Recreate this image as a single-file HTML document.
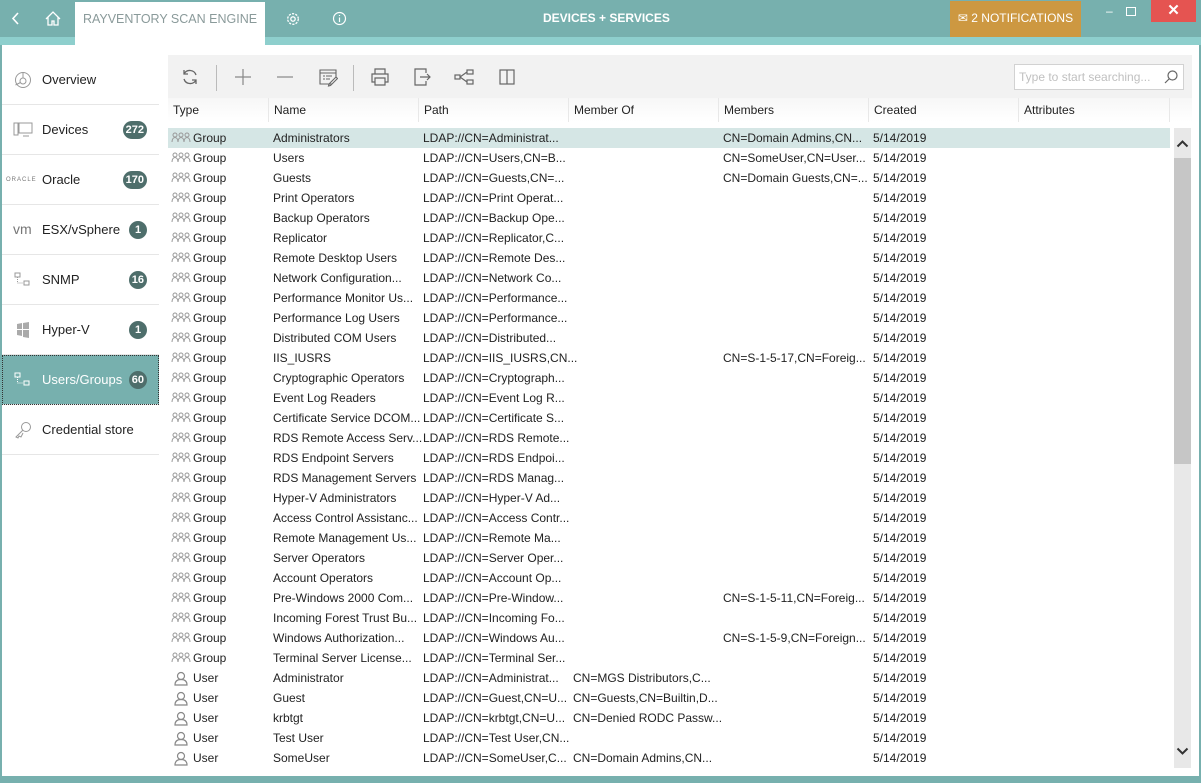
<!DOCTYPE html>
<html><head><meta charset="utf-8">
<style>
*{margin:0;padding:0;box-sizing:border-box}
body{width:1201px;height:783px;overflow:hidden;background:#fff;font-family:"Liberation Sans",sans-serif;font-size:12px;color:#222;position:relative}
.abs{position:absolute}
#title{left:0;top:0;width:1201px;height:37px;background:#77b0ae}
#strip{left:0;top:37px;width:1201px;height:8px;background:#8ecfcd}
#tab{left:75px;top:2px;width:190px;height:43px;background:#fff;color:#8a9a9a;font-size:12.5px;line-height:34px;text-align:center}
.tt{color:#fff;font-weight:bold;font-size:12px}
#notif{left:950px;top:1px;width:131px;height:36px;background:#cd9841;color:#fff;font-size:12px;line-height:35px;text-align:center}
#close{left:1151px;top:0;width:45px;height:22px;background:#e55451;color:#fff;text-align:center;font-size:15px;font-weight:bold;line-height:21px}
#lb{left:0;top:45px;width:2px;height:738px;background:#77b0ae}
#rb{left:1199px;top:45px;width:2px;height:738px;background:#77b0ae}
#bb{left:0;top:776px;width:1201px;height:7px;background:#77b0ae}
.si{position:absolute;left:2px;width:157px;height:50px;border-bottom:1px solid #e6e6e6;font-size:13px;line-height:50px}
.si .lab{position:absolute;left:40px}
.si .ic{position:absolute;left:11px;top:16px;width:20px;height:18px}
.bad{position:absolute;right:12px;top:16px;height:18px;min-width:18px;padding:0 3px;border-radius:9px;background:#4e6e6b;color:#fff;font-size:11px;font-weight:bold;line-height:18px;text-align:center}
.sel{background:#77b0ae;color:#fff;outline:1px dotted #333;outline-offset:-1px}
#tb{left:168px;top:55px;width:1024px;height:43px;background:#f2f2f2}
.tbi{position:absolute;top:12px;width:20px;height:20px}
#search{left:1014px;top:64px;width:170px;height:26px;background:#fff;border:1px solid #d2d2d2;color:#c0c0c0;font-size:12px;line-height:24px;padding-left:4px}
#hdr{left:168px;top:98px;width:1024px;height:24px;background:linear-gradient(#f7f7f7,#fff)}
.hc{position:absolute;top:0;height:24px;line-height:24px;padding-left:5px;border-right:1px solid #e8e8e8}
.row{position:absolute;left:168px;width:1002px;height:20px;line-height:20px}
.row span{position:absolute;white-space:nowrap}
.row .ty{left:25px}.row .nm{left:105px}.row .pa{left:255px}.row .mo{left:405px}.row .me{left:555px}.row .cr{left:705px}
.row svg{position:absolute;left:3px;top:3px}
#sb{left:1174px;top:128px;width:17px;height:640px;background:#e8e8e8}
#thumb{left:1174px;top:158px;width:17px;height:306px;background:#c6c6c6}
</style></head><body>
<svg width="0" height="0" style="position:absolute"><defs>
<g id="grp" fill="none" stroke="#999" stroke-width="1"><circle cx="4" cy="4" r="2"/><path d="M1 11c0-3 1.5-4.5 3-4.5S7 8 7 11"/><circle cx="10" cy="4" r="2"/><path d="M7 11c0-3 1.5-4.5 3-4.5S13 8 13 11"/><circle cx="16" cy="4" r="2"/><path d="M13 11c0-3 1.5-4.5 3-4.5S19 8 19 11"/></g>
<g id="usr" fill="none" stroke="#888" stroke-width="1.2"><circle cx="10" cy="5" r="3.5"/><path d="M4 14c0-4 2.5-5.5 6-5.5s6 1.5 6 5.5z"/></g>
</defs></svg>

<div id="title" class="abs"></div>
<div id="strip" class="abs"></div>
<svg class="abs" style="left:11px;top:11px" width="10" height="15" fill="none" stroke="#fff" stroke-width="1.6"><path d="M7 2L2 7.5 7 13"/></svg>
<svg class="abs" style="left:45px;top:11px" width="16" height="15" fill="none" stroke="#fff" stroke-width="1.3"><path d="M1 8L8 1l7 7M3 6v8h4v-4h2v4h4V6"/></svg>
<div id="tab" class="abs">RAYVENTORY SCAN ENGINE</div>
<svg class="abs" style="left:286px;top:12px" width="14" height="14" fill="none" stroke="#fff" stroke-width="1.3"><circle cx="7" cy="7" r="2.2"/><circle cx="7" cy="7" r="5.3" stroke-dasharray="2.2 1.2"/></svg>
<svg class="abs" style="left:332px;top:11px" width="15" height="15" fill="none" stroke="#fff" stroke-width="1.2"><circle cx="7.5" cy="7.5" r="6"/><path d="M7.5 6.5v4.5M7.5 4v1"/></svg>
<div class="abs tt" style="left:543px;top:11px">DEVICES + SERVICES</div>
<div id="notif" class="abs">&#9993; 2 NOTIFICATIONS</div>
<div class="abs" style="left:1106px;top:4px;color:#fff;font-size:12px">&#8211;</div>
<div class="abs" style="left:1126px;top:7px;width:10px;height:9px;border:1px solid #fff"></div>
<div id="close" class="abs">&#10005;</div>
<div id="lb" class="abs"></div><div id="rb" class="abs"></div>

<div class="si" style="top:55px"><svg class="ic" viewBox="0 0 20 18" fill="none" stroke="#999"><circle cx="10" cy="9" r="7.5"/><circle cx="10" cy="10" r="3"/><path d="M10 1.5v5.5M7.5 11.5l-5 2.5"/></svg><span class="lab">Overview</span></div>
<div class="si" style="top:105px"><svg class="ic" viewBox="0 0 20 18" fill="none" stroke="#999"><rect x="1" y="2" width="4" height="12"/><rect x="6" y="2" width="13" height="10"/><path d="M10 15h6"/></svg><span class="lab">Devices</span><span class="bad">272</span></div>
<div class="si" style="top:155px"><span style="position:absolute;left:4px;top:0;font-size:6px;color:#777;letter-spacing:1px">ORACLE</span><span class="lab">Oracle</span><span class="bad">170</span></div>
<div class="si" style="top:205px"><span style="position:absolute;left:11px;top:-1px;font-size:14px;color:#777">vm</span><span class="lab">ESX/vSphere</span><span class="bad">1</span></div>
<div class="si" style="top:255px"><svg class="ic" viewBox="0 0 20 18" fill="none" stroke="#999"><rect x="2" y="2" width="5" height="4"/><rect x="11" y="10" width="5" height="4"/><path d="M4.5 6v6h6" stroke-dasharray="1 1"/></svg><span class="lab">SNMP</span><span class="bad">16</span></div>
<div class="si" style="top:305px"><svg class="ic" viewBox="0 0 20 18" fill="#aaa"><path d="M4 3l5-1v6H4zM10 2l6-1v7h-6zM4 9h5v6l-5-1zM10 9h6v8l-6-1z"/></svg><span class="lab">Hyper-V</span><span class="bad">1</span></div>
<div class="si sel" style="top:355px;height:50px"><svg class="ic" viewBox="0 0 20 18" fill="none" stroke="#fff"><rect x="2" y="2" width="5" height="4"/><rect x="11" y="10" width="5" height="4"/><path d="M4.5 6v6h6" stroke-dasharray="1 1"/></svg><span class="lab">Users/Groups</span><span class="bad">60</span></div>
<div class="si" style="top:405px"><svg class="ic" viewBox="0 0 20 18" fill="none" stroke="#999"><circle cx="13" cy="6" r="4.5"/><path d="M10 9l-7 7 2 1 1-2 2 1 1-2 1-2"/></svg><span class="lab">Credential store</span></div>

<div id="tb" class="abs">
<svg class="tbi" style="left:12px" viewBox="0 0 20 20" fill="none" stroke="#666" stroke-width="1.3"><path d="M16 8a6.5 6.5 0 0 0-12-1M4 12a6.5 6.5 0 0 0 12 1M4 3v4h4M16 17v-4h-4"/></svg>
<div class="abs" style="left:48px;top:10px;width:1px;height:26px;background:#bbb"></div>
<svg class="tbi" style="left:65px" viewBox="0 0 20 20" stroke="#888" stroke-width="1.2"><path d="M10 2v16M2 10h16"/></svg>
<svg class="tbi" style="left:107px" viewBox="0 0 20 20" stroke="#888" stroke-width="1.2"><path d="M2 10h16"/></svg>
<svg class="tbi" style="left:150px" viewBox="0 0 20 20" fill="none" stroke="#666" stroke-width="1.1"><path d="M14 17H2V3h16v7M2 6h16M5 9h2M8 9h6M5 12h2M8 12h4M11 17l7-7 1.5 1.5-7 7-2 .5z"/></svg>
<div class="abs" style="left:185px;top:10px;width:1px;height:26px;background:#bbb"></div>
<svg class="tbi" style="left:202px" viewBox="0 0 20 20" fill="none" stroke="#666" stroke-width="1.2"><path d="M5 7V2h10v5M5 15H2V7h16v8h-3M5 11h10v7H5z"/></svg>
<svg class="tbi" style="left:244px" viewBox="0 0 20 20" fill="none" stroke="#666" stroke-width="1.2"><path d="M14 6V2H3v16h11v-4M8 10h10M15 7l3 3-3 3"/></svg>
<svg class="tbi" style="left:286px" viewBox="0 0 20 20" fill="none" stroke="#666" stroke-width="1.2"><rect x="1" y="8" width="5" height="4"/><rect x="13" y="3" width="6" height="4"/><rect x="13" y="13" width="6" height="4"/><path d="M6 10l7-5M6 10l7 5"/></svg>
<svg class="tbi" style="left:329px" viewBox="0 0 20 20" fill="none" stroke="#666" stroke-width="1.2"><rect x="3" y="3" width="14" height="14"/><path d="M10 3v14"/></svg>
</div>
<div id="search" class="abs">Type to start searching...<svg style="position:absolute;right:5px;top:5px" width="14" height="14" fill="none" stroke="#666" stroke-width="1.2"><circle cx="8.5" cy="5.5" r="4.5"/><path d="M5.5 8.5L1 13"/></svg></div>

<div id="hdr" class="abs">
<div class="hc" style="left:0;width:101px">Type</div>
<div class="hc" style="left:101px;width:150px">Name</div>
<div class="hc" style="left:251px;width:150px">Path</div>
<div class="hc" style="left:401px;width:150px">Member Of</div>
<div class="hc" style="left:551px;width:150px">Members</div>
<div class="hc" style="left:701px;width:150px">Created</div>
<div class="hc" style="left:851px;width:151px">Attributes</div>
</div>

<div class="row" style="top:128px;background:#d5e6e5"><svg width="20" height="14"><use href="#grp"/></svg><span class="ty">Group</span><span class="nm">Administrators</span><span class="pa">LDAP://CN=Administrat...</span><span class="me">CN=Domain Admins,CN...</span><span class="cr">5/14/2019</span></div>
<div class="row" style="top:148px"><svg width="20" height="14"><use href="#grp"/></svg><span class="ty">Group</span><span class="nm">Users</span><span class="pa">LDAP://CN=Users,CN=B...</span><span class="me">CN=SomeUser,CN=User...</span><span class="cr">5/14/2019</span></div>
<div class="row" style="top:168px"><svg width="20" height="14"><use href="#grp"/></svg><span class="ty">Group</span><span class="nm">Guests</span><span class="pa">LDAP://CN=Guests,CN=...</span><span class="me">CN=Domain Guests,CN=...</span><span class="cr">5/14/2019</span></div>
<div class="row" style="top:188px"><svg width="20" height="14"><use href="#grp"/></svg><span class="ty">Group</span><span class="nm">Print Operators</span><span class="pa">LDAP://CN=Print Operat...</span><span class="cr">5/14/2019</span></div>
<div class="row" style="top:208px"><svg width="20" height="14"><use href="#grp"/></svg><span class="ty">Group</span><span class="nm">Backup Operators</span><span class="pa">LDAP://CN=Backup Ope...</span><span class="cr">5/14/2019</span></div>
<div class="row" style="top:228px"><svg width="20" height="14"><use href="#grp"/></svg><span class="ty">Group</span><span class="nm">Replicator</span><span class="pa">LDAP://CN=Replicator,C...</span><span class="cr">5/14/2019</span></div>
<div class="row" style="top:248px"><svg width="20" height="14"><use href="#grp"/></svg><span class="ty">Group</span><span class="nm">Remote Desktop Users</span><span class="pa">LDAP://CN=Remote Des...</span><span class="cr">5/14/2019</span></div>
<div class="row" style="top:268px"><svg width="20" height="14"><use href="#grp"/></svg><span class="ty">Group</span><span class="nm">Network Configuration...</span><span class="pa">LDAP://CN=Network Co...</span><span class="cr">5/14/2019</span></div>
<div class="row" style="top:288px"><svg width="20" height="14"><use href="#grp"/></svg><span class="ty">Group</span><span class="nm">Performance Monitor Us...</span><span class="pa">LDAP://CN=Performance...</span><span class="cr">5/14/2019</span></div>
<div class="row" style="top:308px"><svg width="20" height="14"><use href="#grp"/></svg><span class="ty">Group</span><span class="nm">Performance Log Users</span><span class="pa">LDAP://CN=Performance...</span><span class="cr">5/14/2019</span></div>
<div class="row" style="top:328px"><svg width="20" height="14"><use href="#grp"/></svg><span class="ty">Group</span><span class="nm">Distributed COM Users</span><span class="pa">LDAP://CN=Distributed...</span><span class="cr">5/14/2019</span></div>
<div class="row" style="top:348px"><svg width="20" height="14"><use href="#grp"/></svg><span class="ty">Group</span><span class="nm">IIS_IUSRS</span><span class="pa">LDAP://CN=IIS_IUSRS,CN...</span><span class="me">CN=S-1-5-17,CN=Foreig...</span><span class="cr">5/14/2019</span></div>
<div class="row" style="top:368px"><svg width="20" height="14"><use href="#grp"/></svg><span class="ty">Group</span><span class="nm">Cryptographic Operators</span><span class="pa">LDAP://CN=Cryptograph...</span><span class="cr">5/14/2019</span></div>
<div class="row" style="top:388px"><svg width="20" height="14"><use href="#grp"/></svg><span class="ty">Group</span><span class="nm">Event Log Readers</span><span class="pa">LDAP://CN=Event Log R...</span><span class="cr">5/14/2019</span></div>
<div class="row" style="top:408px"><svg width="20" height="14"><use href="#grp"/></svg><span class="ty">Group</span><span class="nm">Certificate Service DCOM...</span><span class="pa">LDAP://CN=Certificate S...</span><span class="cr">5/14/2019</span></div>
<div class="row" style="top:428px"><svg width="20" height="14"><use href="#grp"/></svg><span class="ty">Group</span><span class="nm">RDS Remote Access Serv...</span><span class="pa">LDAP://CN=RDS Remote...</span><span class="cr">5/14/2019</span></div>
<div class="row" style="top:448px"><svg width="20" height="14"><use href="#grp"/></svg><span class="ty">Group</span><span class="nm">RDS Endpoint Servers</span><span class="pa">LDAP://CN=RDS Endpoi...</span><span class="cr">5/14/2019</span></div>
<div class="row" style="top:468px"><svg width="20" height="14"><use href="#grp"/></svg><span class="ty">Group</span><span class="nm">RDS Management Servers</span><span class="pa">LDAP://CN=RDS Manag...</span><span class="cr">5/14/2019</span></div>
<div class="row" style="top:488px"><svg width="20" height="14"><use href="#grp"/></svg><span class="ty">Group</span><span class="nm">Hyper-V Administrators</span><span class="pa">LDAP://CN=Hyper-V Ad...</span><span class="cr">5/14/2019</span></div>
<div class="row" style="top:508px"><svg width="20" height="14"><use href="#grp"/></svg><span class="ty">Group</span><span class="nm">Access Control Assistanc...</span><span class="pa">LDAP://CN=Access Contr...</span><span class="cr">5/14/2019</span></div>
<div class="row" style="top:528px"><svg width="20" height="14"><use href="#grp"/></svg><span class="ty">Group</span><span class="nm">Remote Management Us...</span><span class="pa">LDAP://CN=Remote Ma...</span><span class="cr">5/14/2019</span></div>
<div class="row" style="top:548px"><svg width="20" height="14"><use href="#grp"/></svg><span class="ty">Group</span><span class="nm">Server Operators</span><span class="pa">LDAP://CN=Server Oper...</span><span class="cr">5/14/2019</span></div>
<div class="row" style="top:568px"><svg width="20" height="14"><use href="#grp"/></svg><span class="ty">Group</span><span class="nm">Account Operators</span><span class="pa">LDAP://CN=Account Op...</span><span class="cr">5/14/2019</span></div>
<div class="row" style="top:588px"><svg width="20" height="14"><use href="#grp"/></svg><span class="ty">Group</span><span class="nm">Pre-Windows 2000 Com...</span><span class="pa">LDAP://CN=Pre-Window...</span><span class="me">CN=S-1-5-11,CN=Foreig...</span><span class="cr">5/14/2019</span></div>
<div class="row" style="top:608px"><svg width="20" height="14"><use href="#grp"/></svg><span class="ty">Group</span><span class="nm">Incoming Forest Trust Bu...</span><span class="pa">LDAP://CN=Incoming Fo...</span><span class="cr">5/14/2019</span></div>
<div class="row" style="top:628px"><svg width="20" height="14"><use href="#grp"/></svg><span class="ty">Group</span><span class="nm">Windows Authorization...</span><span class="pa">LDAP://CN=Windows Au...</span><span class="me">CN=S-1-5-9,CN=Foreign...</span><span class="cr">5/14/2019</span></div>
<div class="row" style="top:648px"><svg width="20" height="14"><use href="#grp"/></svg><span class="ty">Group</span><span class="nm">Terminal Server License...</span><span class="pa">LDAP://CN=Terminal Ser...</span><span class="cr">5/14/2019</span></div>
<div class="row" style="top:668px"><svg width="20" height="15"><use href="#usr"/></svg><span class="ty">User</span><span class="nm">Administrator</span><span class="pa">LDAP://CN=Administrat...</span><span class="mo">CN=MGS Distributors,C...</span><span class="cr">5/14/2019</span></div>
<div class="row" style="top:688px"><svg width="20" height="15"><use href="#usr"/></svg><span class="ty">User</span><span class="nm">Guest</span><span class="pa">LDAP://CN=Guest,CN=U...</span><span class="mo">CN=Guests,CN=Builtin,D...</span><span class="cr">5/14/2019</span></div>
<div class="row" style="top:708px"><svg width="20" height="15"><use href="#usr"/></svg><span class="ty">User</span><span class="nm">krbtgt</span><span class="pa">LDAP://CN=krbtgt,CN=U...</span><span class="mo">CN=Denied RODC Passw...</span><span class="cr">5/14/2019</span></div>
<div class="row" style="top:728px"><svg width="20" height="15"><use href="#usr"/></svg><span class="ty">User</span><span class="nm">Test User</span><span class="pa">LDAP://CN=Test User,CN...</span><span class="cr">5/14/2019</span></div>
<div class="row" style="top:748px"><svg width="20" height="15"><use href="#usr"/></svg><span class="ty">User</span><span class="nm">SomeUser</span><span class="pa">LDAP://CN=SomeUser,C...</span><span class="mo">CN=Domain Admins,CN...</span><span class="cr">5/14/2019</span></div>

<div id="sb" class="abs"></div>
<div id="thumb" class="abs"></div>
<svg class="abs" style="left:1176px;top:139px" width="13" height="9" fill="none" stroke="#333" stroke-width="2"><path d="M1.5 7.5l5-5 5 5"/></svg>
<svg class="abs" style="left:1176px;top:747px" width="13" height="9" fill="none" stroke="#333" stroke-width="2"><path d="M1.5 1.5l5 5 5-5"/></svg>
<div id="bb" class="abs"></div>
</body></html>
